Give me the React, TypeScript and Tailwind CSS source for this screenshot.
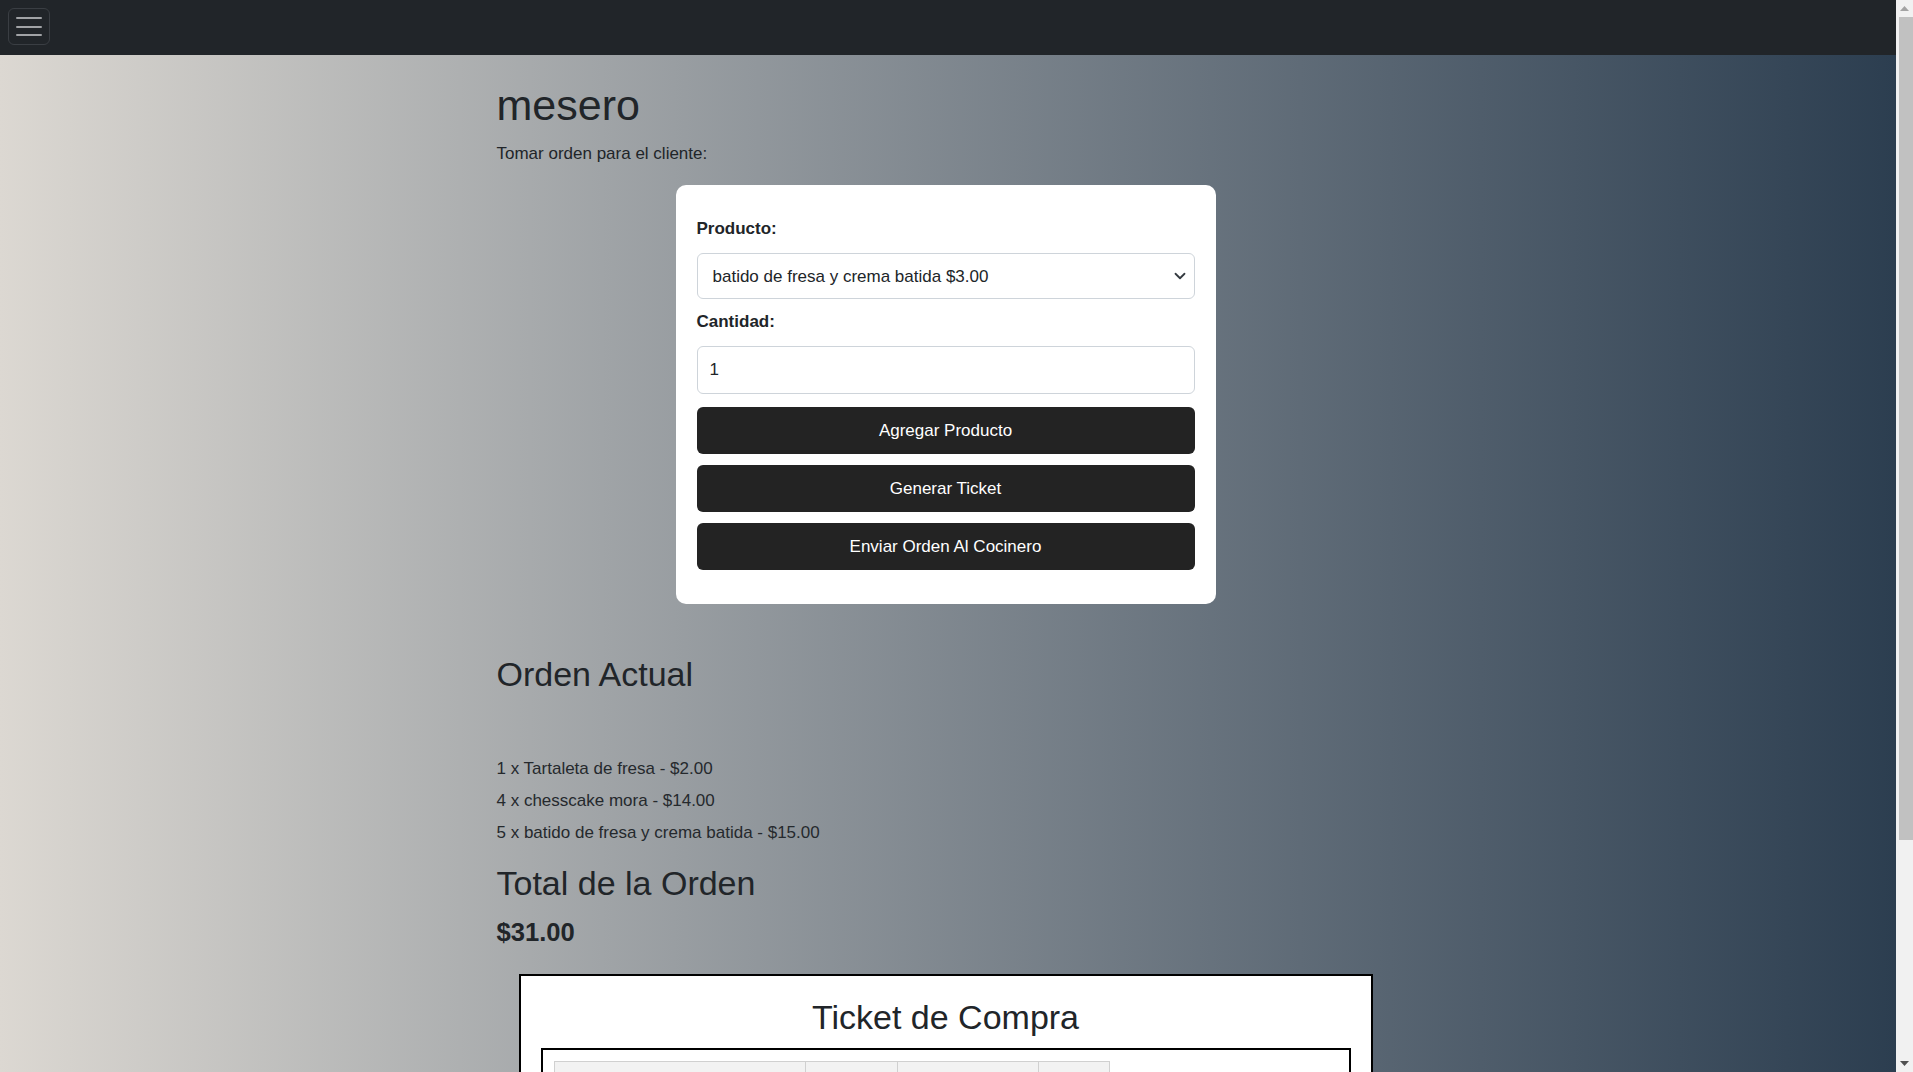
import React from "react";

const items = [
  "1 x Tartaleta de fresa - $2.00",
  "4 x chesscake mora - $14.00",
  "5 x batido de fresa y crema batida - $15.00",
];

export default function App() {
  return (
    <div
      className="flex h-screen w-full overflow-hidden text-[#212529]"
      style={{ fontFamily: '"Liberation Sans", Arial, sans-serif' }}
    >
      <div className="flex-1 min-w-0 h-full overflow-hidden bg-linear-to-r from-[#dcd8d2] to-[#2c3e50]">
        <nav className="h-[55px] bg-[#212529] flex items-start pl-[8px] pt-[8px]">
          <button className="w-[42px] h-[37px] rounded-[6px] border border-[#3a3e43] flex flex-col items-center justify-center gap-[6.5px]">
            <span className="block w-[26px] h-[2px] bg-[#a1a3a6] rounded" />
            <span className="block w-[26px] h-[2px] bg-[#a1a3a6] rounded" />
            <span className="block w-[26px] h-[2px] bg-[#a1a3a6] rounded" />
          </button>
        </nav>

        <main className="w-[903px] mx-auto pt-[25px] pr-[3px]">
          <h1 className="text-[43px] leading-[51.6px] mb-[9.5px] font-normal">mesero</h1>
          <p className="text-[17px] leading-[25.6px] mb-[18px]">Tomar orden para el cliente:</p>

          <div className="flex justify-center pr-[2px]">
            <div className="w-[540px] bg-white rounded-[10px] px-[21px] pt-[31px] pb-[34px]">
              <label className="block text-[17px] leading-[25.6px] font-bold mb-[12px]">Producto:</label>
              <div className="relative">
                <select
                  className="w-full h-[46px] appearance-none rounded-[6px] border border-[#ced4da] bg-white pl-[15px] pr-[40px] text-[17px] text-[#212529] outline-none"
                  style={{ fontFamily: '"Liberation Sans", Arial, sans-serif' }}
                  defaultValue="b"
                >
                  <option value="b">batido de fresa y crema batida $3.00</option>
                </select>
                <svg
                  className="absolute right-[9px] top-1/2 -translate-y-1/2 pointer-events-none"
                  width="12"
                  height="10"
                  viewBox="0 0 16 12"
                  fill="none"
                >
                  <path d="m2 3 6 6 6-6" stroke="#343a40" strokeWidth="2.4" strokeLinecap="round" strokeLinejoin="round" />
                </svg>
              </div>
              <label className="block text-[17px] leading-[25.6px] font-bold mt-[10px] mb-[11.5px]">Cantidad:</label>
              <input
                type="number"
                defaultValue={1}
                className="block w-full h-[48px] rounded-[6px] border border-[#ced4da] bg-white pl-[12px] text-[17px] text-[#212529] outline-none [appearance:textfield] [&::-webkit-inner-spin-button]:appearance-none"
                style={{ fontFamily: '"Liberation Sans", Arial, sans-serif' }}
              />
              <div className="flex flex-col gap-[11px] mt-[12.5px]">
                {["Agregar Producto", "Generar Ticket", "Enviar Orden Al Cocinero"].map((t) => (
                  <button
                    key={t}
                    className="w-full h-[47px] rounded-[6px] bg-[#232323] text-white text-[17px]"
                    style={{ fontFamily: '"Liberation Sans", Arial, sans-serif' }}
                  >
                    {t}
                  </button>
                ))}
              </div>
            </div>
          </div>

          <h2 className="text-[34px] leading-[40.8px] mt-[50.6px] font-normal">Orden Actual</h2>
          <ul className="mt-[60.4px] flex flex-col gap-[6.5px]">
            {items.map((it) => (
              <li key={it} className="text-[17px] leading-[25.6px] text-[#25292d]">
                {it}
              </li>
            ))}
          </ul>
          <h2 className="text-[34px] leading-[40.8px] mt-[17.8px] font-normal">Total de la Orden</h2>
          <h4 className="text-[25.6px] leading-[30.7px] mt-[13px] font-bold">$31.00</h4>

          <div className="mt-[26px] ml-[22px] mr-[24px] border-2 border-black bg-white px-[20px] pt-[21px]">
            <h2 className="text-[34px] leading-[40.8px] text-center font-normal">Ticket de Compra</h2>
            <div className="mt-[10px] border-2 border-black px-[11.5px] pt-[11px] pb-[20px]">
              <table className="border-collapse text-[16px]">
                <thead>
                  <tr className="bg-[#f2f2f2] h-[40px]">
                    <th className="w-[251px] border border-[#d0d0d0]"></th>
                    <th className="w-[92px] border border-[#d0d0d0]"></th>
                    <th className="w-[141px] border border-[#d0d0d0]"></th>
                    <th className="w-[71px] border border-[#d0d0d0]"></th>
                  </tr>
                </thead>
                <tbody>
                  {items.map((it) => (
                    <tr key={it} className="h-[40px]">
                      <td className="border border-[#d0d0d0]"></td>
                      <td className="border border-[#d0d0d0]"></td>
                      <td className="border border-[#d0d0d0]"></td>
                      <td className="border border-[#d0d0d0]"></td>
                    </tr>
                  ))}
                </tbody>
              </table>
            </div>
          </div>
        </main>
      </div>

      <aside className="w-[17px] h-full bg-[#f1f1f1] flex flex-col items-center">
        <div className="h-[17px] w-full flex items-center justify-center">
          <svg width="9" height="5" viewBox="0 0 9 5">
            <path d="M0 5 L4.5 0 L9 5 Z" fill="#a3a3a3" />
          </svg>
        </div>
        <div className="ml-[3px] w-[14px] h-[823px] bg-[#c1c1c1]" />
        <div className="flex-1" />
        <div className="h-[17px] w-full flex items-center justify-center">
          <svg width="9" height="5" viewBox="0 0 9 5">
            <path d="M0 0 L9 0 L4.5 5 Z" fill="#505050" />
          </svg>
        </div>
      </aside>
    </div>
  );
}
